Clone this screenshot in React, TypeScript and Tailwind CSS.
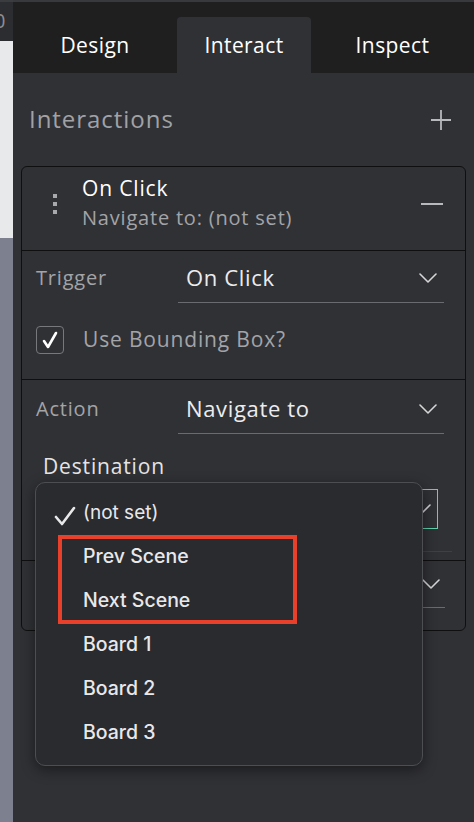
import React from 'react';

const uiFont = { fontFamily: '"Open Sans", "Noto Sans", sans-serif' };
const menuFont = { fontFamily: 'Inter, "Liberation Sans", sans-serif' };

const Chevron = ({ className = '' }: { className?: string }) => (
  <svg width="18" height="10" viewBox="0 0 18 10" className={className} fill="none">
    <path d="M1 1l8 8 8-8" stroke="#d6d6d8" strokeWidth="1.6" strokeLinecap="round" strokeLinejoin="round" />
  </svg>
);

const SelectRow = ({ label, value }: { label: string; value: string }) => (
  <div className="flex items-center h-[50px] pl-[14px] pr-[21px]">
    <div className="w-[142px] text-[20px] tracking-[0.04em] text-[#a3a4a8]">{label}</div>
    <div className="flex-1 h-full flex items-center justify-between border-b border-[#6a6b70] pl-[8px] pr-[7px]">
      <span className="text-[22px] tracking-[0.03em] text-[#ececee]">{value}</span>
      <Chevron />
    </div>
  </div>
);

export default function App() {
  const items = ['Prev Scene', 'Next Scene', 'Board 1', 'Board 2', 'Board 3'];

  return (
    <div className="w-[474px] h-[822px] flex overflow-hidden bg-[#303135]" style={uiFont}>
      {/* left canvas strip */}
      <div className="w-[13px] flex flex-col shrink-0">
        <div className="h-[41px] bg-[#2c2d31] border-t-2 border-[#3b3c40] text-[#8d8e92] text-[20px] leading-[38px] -ml-[6px] overflow-hidden">0</div>
        <div className="h-[197px] bg-[#e8e9eb]"></div>
        <div className="flex-1 bg-[#7d808f]"></div>
      </div>

      {/* side panel */}
      <div className="flex-1 flex flex-col relative">
        {/* tabs */}
        <div className="h-[73px] bg-[#1f1f1f] border-t-2 border-[#38393c] flex items-end">
          <div className="w-[164px] h-[56px] flex items-center justify-center text-[21px] tracking-[0.02em] text-white pt-[1px]">Design</div>
          <div className="w-[134px] h-[56px] flex items-center justify-center text-[21px] tracking-[0.02em] text-white bg-[#303135] rounded-t-[4px] pt-[1px]">Interact</div>
          <div className="flex-1 h-[56px] flex items-center justify-center text-[21px] tracking-[0.02em] text-white pt-[1px]">Inspect</div>
        </div>

        {/* header */}
        <div className="h-[93px] flex items-center justify-between pl-[16px] pr-[22px]">
          <span className="text-[24px] tracking-[0.04em] text-[#a1a2a6] pb-[2px]">Interactions</span>
          <svg width="22" height="22" viewBox="0 0 22 22">
            <path d="M11 1v20M1 11h20" stroke="#b8b9bc" strokeWidth="1.8" />
          </svg>
        </div>

        {/* interaction card */}
        <div className="mx-[8px] border border-[#0f0f10] rounded-[6px] flex flex-col">
          <div className="h-[84px] flex items-start pt-[7px] pl-[31px] pr-[22px] border-b border-[#0f0f10]">
            <div className="flex flex-col gap-[4px] w-[4px] mt-[20px] mr-[25px]">
              <div className="w-[4px] h-[4px] bg-[#a8a9ad]"></div>
              <div className="w-[4px] h-[4px] bg-[#a8a9ad]"></div>
              <div className="w-[4px] h-[4px] bg-[#a8a9ad]"></div>
            </div>
            <div className="flex-1 flex flex-col">
              <span className="text-[21px] tracking-[0.04em] text-white leading-[29px]">On Click</span>
              <span className="text-[20px] tracking-[0.04em] text-[#a3a4a8] leading-[29px]">Navigate to: (not set)</span>
            </div>
            <div className="w-[22px] h-[2px] bg-[#b8b9bc] mt-[29px]"></div>
          </div>

          <div className="h-[129px] border-b border-[#0f0f10] pt-[2px]">
            <SelectRow label="Trigger" value="On Click" />
            <div className="flex items-center pl-[14px] mt-[21px]">
              <div className="w-[28px] h-[28px] rounded-[4px] border border-[#77787c] flex items-center justify-center">
                <svg width="16" height="18" viewBox="0 0 16 18">
                  <path d="M2 10l4 6L14 2" stroke="white" strokeWidth="2.6" fill="none" strokeLinecap="round" strokeLinejoin="round" />
                </svg>
              </div>
              <span className="ml-[19px] text-[21px] tracking-[0.04em] text-[#a3a4a8]">Use Bounding Box?</span>
            </div>
          </div>

          <div className="h-[181px] border-b border-[#0f0f10] pt-[4px]">
            <SelectRow label="Action" value="Navigate to" />
            <div className="pl-[21px] mt-[18px] text-[21px] leading-[28px] tracking-[0.04em] text-[#e4e4e6]">Destination</div>
            <div className="pl-[14px] pr-[27px] mt-[9px]">
              <div className="h-[40px] border border-[#5fd3ad] flex items-center justify-end pr-[6px]">
                <Chevron />
              </div>
            </div>
            <div className="ml-[14px] mr-[13px] mt-[22px] border-b border-[#3f4044]"></div>
          </div>

          <div className="h-[69px] flex items-start pl-[156px] pr-[20px]">
            <div className="flex-1 h-[47px] flex items-center justify-end border-b border-[#6a6b70] pr-[5px]">
              <Chevron />
            </div>
          </div>
        </div>

        {/* destination dropdown */}
        <div
          className="absolute left-[22px] top-[482px] w-[388px] h-[284px] bg-[#2a2b2f] border border-[#4d4e52] rounded-[10px] shadow-[0_4px_14px_rgba(0,0,0,0.45)] flex flex-col pt-[8px]"
          style={menuFont}
        >
          <div className="h-[44px] flex items-center pl-[18px]">
            <svg width="22" height="20" viewBox="0 0 22 20" className="mr-[7px] mt-[6px]">
              <path d="M2 11l6 7L20 2" stroke="#e8e8ea" strokeWidth="2.6" fill="none" strokeLinecap="round" strokeLinejoin="round" />
            </svg>
            <span className="text-[19px] text-[#e8e8ea]">(not set)</span>
          </div>
          {items.map((it) => (
            <div key={it} className="h-[44px] flex items-center pl-[47px] text-[19.5px] text-[#e8e8ea] font-medium">
              {it}
            </div>
          ))}
        </div>

        {/* highlight box */}
        <div className="absolute left-[45px] top-[535px] w-[239px] h-[89px] border-[4px] border-[#e8402a]"></div>
      </div>
    </div>
  );
}
